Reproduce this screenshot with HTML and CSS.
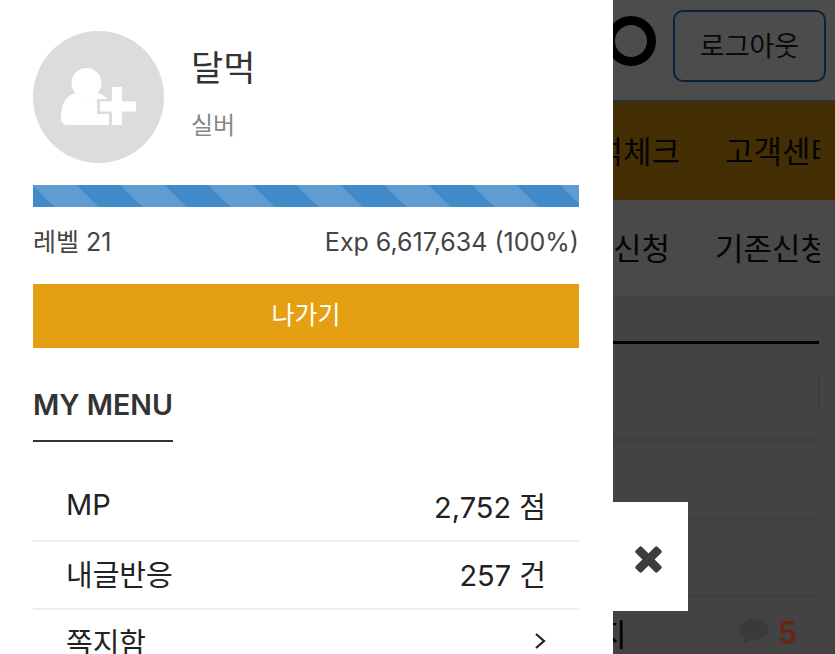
FILE: index.html
```html
<!DOCTYPE html>
<html lang="ko">
<head>
<meta charset="UTF-8" />
<meta name="viewport" content="width=device-width, initial-scale=1" />
<title>달먹</title>
<link rel="stylesheet" href="styles.css">
</head>
<body>

<div class="page">
  <header class="top-bar">
    <span class="logo-o"></span>
    <button class="btn-logout">로그아웃</button>
  </header>
  <nav class="main-nav">
    <span>출석체크</span>
    <span class="cut">고객센터</span>
  </nav>
  <nav class="sub-nav">
    <span>신규신청</span>
    <span class="cut">기존신청</span>
  </nav>
  <section class="board">
    <div class="board-head"><i></i></div>
    <div class="board-row"></div>
    <div class="board-row"></div>
    <div class="board-row last">
      <span class="row-title">공지</span>
      <svg class="bubble" viewBox="0 0 30 26"><path d="M15 0C7 0 0 4.500 0 10.500c0 3.500 2.300 6.500 6 8.400-.6 2.500-2 4.700-3.500 6.600 3.500-.8 7-2.700 9.400-4.600 1 .1 2 .2 3.100.2 8 0 15-4.800 15-10.600S23 0 15 0z"/></svg>
      <span class="row-count">5</span>
    </div>
  </section>
</div>

<div class="dim"></div>

<aside class="drawer">
  <div class="profile">
    <div class="avatar">
      <svg viewBox="0 0 131 131">
        <ellipse cx="53.500" cy="52" rx="15" ry="15" fill="#fff"/>
        <path d="M28 87C28 73 33 64 43 62 48 68 59 68 64 62 71 63 76 68 76 75V94H34Q28 94 28 87z" fill="#fff"/>
        <path d="M84 56V94M64 75.500H103" stroke="#dcdcdc" stroke-width="15" fill="none"/>
        <path d="M84 56V94M67 75.500H103" stroke="#fff" stroke-width="10" fill="none"/>
      </svg>
    </div>
    <div class="profile-text">
      <div class="nick">달먹</div>
      <div class="grade">실버</div>
    </div>
  </div>

  <div class="exp-bar"></div>
  <div class="exp-info">
    <span>레벨 21</span>
    <span>Exp 6,617,634 (100%)</span>
  </div>

  <button class="btn-exit">나가기</button>

  <h2 class="menu-title">MY MENU</h2>
  <ul class="menu-list">
    <li><span>MP</span><span>2,752 점</span></li>
    <li><span>내글반응</span><span>257 건</span></li>
    <li>
      <span>쪽지함</span>
      <svg class="chevron" viewBox="0 0 12 18"><path d="M2 2l8 7-8 7"/></svg>
    </li>
  </ul>
</aside>

<button class="btn-close" aria-label="닫기">
  <svg viewBox="0 0 28 28">
    <rect x="-2" y="9.500" width="32" height="9" rx="2" transform="rotate(45 14 14)"/>
    <rect x="-2" y="9.500" width="32" height="9" rx="2" transform="rotate(-45 14 14)"/>
  </svg>
</button>

</body>
</html>
```

FILE: styles.css
```css
html, body {
  margin: 0;
  padding: 0;
  height: 100%;
  overflow: hidden;
}
body {
  font-family: Inter, "Noto Sans CJK KR", sans-serif;
  color: #222;
  background: #fff;
}

/* page behind the drawer */
.page {
  height: 100vh;
  overflow: hidden;
}
.top-bar {
  height: 102px;
  box-sizing: border-box;
  border-bottom: 2px solid #8fb6c8;
  padding: 10px 9px 0 0;
  display: flex;
  justify-content: flex-end;
  gap: 17px;
}
.logo-o {
  width: 50px;
  height: 50px;
  margin-top: 6px;
  box-sizing: border-box;
  border: 9px solid #000;
  border-radius: 50%;
}
.btn-logout {
  width: 153px;
  height: 72px;
  padding: 0 0 4px;
  background: #fff;
  border: 2px solid #2a6fc0;
  border-radius: 10px;
  font: 27px Inter, "Noto Sans CJK KR", sans-serif;
  color: #222;
}
.main-nav, .sub-nav {
  display: flex;
  justify-content: flex-end;
  align-items: center;
  gap: 45px;
  padding-right: 15px;
  font-size: 31px;
  color: #111;
  box-sizing: border-box;
  padding-bottom: 4px;
}
.main-nav {
  height: 98px;
  background: #e59f13;
}
.sub-nav {
  height: 96px;
  background: #f4f4f4;
}
.cut {
  width: 95px;
  overflow: hidden;
  white-space: nowrap;
}
.sub-nav .cut {
  width: 105px;
}
.board {
  height: 358px;
  padding: 45px 16px 0 15px;
  background: #e0e0e0;
}
.board-head {
  height: 100px;
  border-top: 3px solid #000;
  border-bottom: 2px solid #ccc;
  box-sizing: border-box;
  display: flex;
  justify-content: flex-end;
  padding-top: 32px;
}
.board-head i {
  width: 1px;
  height: 32px;
  background: #bbb;
}
.board-row {
  height: 76px;
  border-bottom: 2px solid #d0d0d0;
}
.board-row.last {
  border: 0;
  display: flex;
  justify-content: flex-end;
  align-items: center;
  height: 70px;
  padding-right: 22px;
  font-size: 31px;
}
.row-title {
  margin-right: 112px;
  color: #000;
}
.bubble {
  width: 30px;
  height: 26px;
  fill: #c4c4c4;
  margin-right: 9px;
}
.row-count {
  position: relative;
  z-index: 1;
  font-weight: 600;
  color: #6b2410;
}

/* overlay */
.dim {
  position: fixed;
  inset: 0;
  background: rgba(0, 0, 0, 0.7);
}

/* drawer */
.drawer {
  position: fixed;
  top: 0;
  left: 0;
  bottom: 0;
  width: 613px;
  box-sizing: border-box;
  padding: 31px 34px 0 33px;
  background: #fff;
  overflow: hidden;
}
.profile {
  display: flex;
  gap: 27px;
}
.avatar {
  width: 131px;
  height: 132px;
  border-radius: 50%;
  background: #dcdcdc;
}
.avatar svg {
  display: block;
  width: 131px;
  height: 131px;
}
.profile-text {
  padding-top: 12px;
}
.nick {
  font-size: 35px;
  line-height: 50px;
  color: #333;
}
.grade {
  margin-top: 16px;
  font-size: 24px;
  line-height: 34px;
  color: #888;
}
.exp-bar {
  height: 22px;
  margin-top: 22px;
  background-color: #428bca;
  background-image: linear-gradient(45deg,
    rgba(255,255,255,.15) 25%, transparent 25%,
    transparent 50%, rgba(255,255,255,.15) 50%,
    rgba(255,255,255,.15) 75%, transparent 75%, transparent);
  background-size: 88px 88px;
}
.exp-info {
  display: flex;
  justify-content: space-between;
  margin-top: 18px;
  font-size: 25px;
  line-height: 34px;
  color: #444;
}
.btn-exit {
  display: block;
  width: 100%;
  height: 64px;
  margin-top: 25px;
  padding: 0 0 6px;
  border: 0;
  background: #e59f13;
  color: #fff;
  font: 25px Inter, "Noto Sans CJK KR", sans-serif;
}
.menu-title {
  display: inline-block;
  margin: 35px 0 0;
  padding-bottom: 13px;
  border-bottom: 2px solid #333;
  width: 140px;
  font-size: 28.500px;
  line-height: 44px;
  font-weight: 600;
  color: #333;
  white-space: nowrap;
}
.menu-list {
  list-style: none;
  margin: 32px 0 0;
  padding: 0;
}
.menu-list li {
  display: flex;
  justify-content: space-between;
  align-items: center;
  height: 61px;
  padding: 0 33px 5px;
  border-bottom: 2px solid #eee;
  font-size: 29px;
  color: #222;
}
.chevron {
  width: 12px;
  height: 18px;
  fill: none;
  stroke: #222;
  stroke-width: 2.200;
}

/* close tab sticking out of the drawer */
.btn-close {
  position: fixed;
  top: 502px;
  left: 613px;
  width: 75px;
  height: 109px;
  padding: 0;
  border: 0;
  background: #fff;
  display: flex;
  align-items: center;
  justify-content: center;
}
.btn-close svg {
  width: 27px;
  height: 27px;
  margin-top: 5px;
  margin-left: -4px;
  fill: #3d3d3d;
}
```
